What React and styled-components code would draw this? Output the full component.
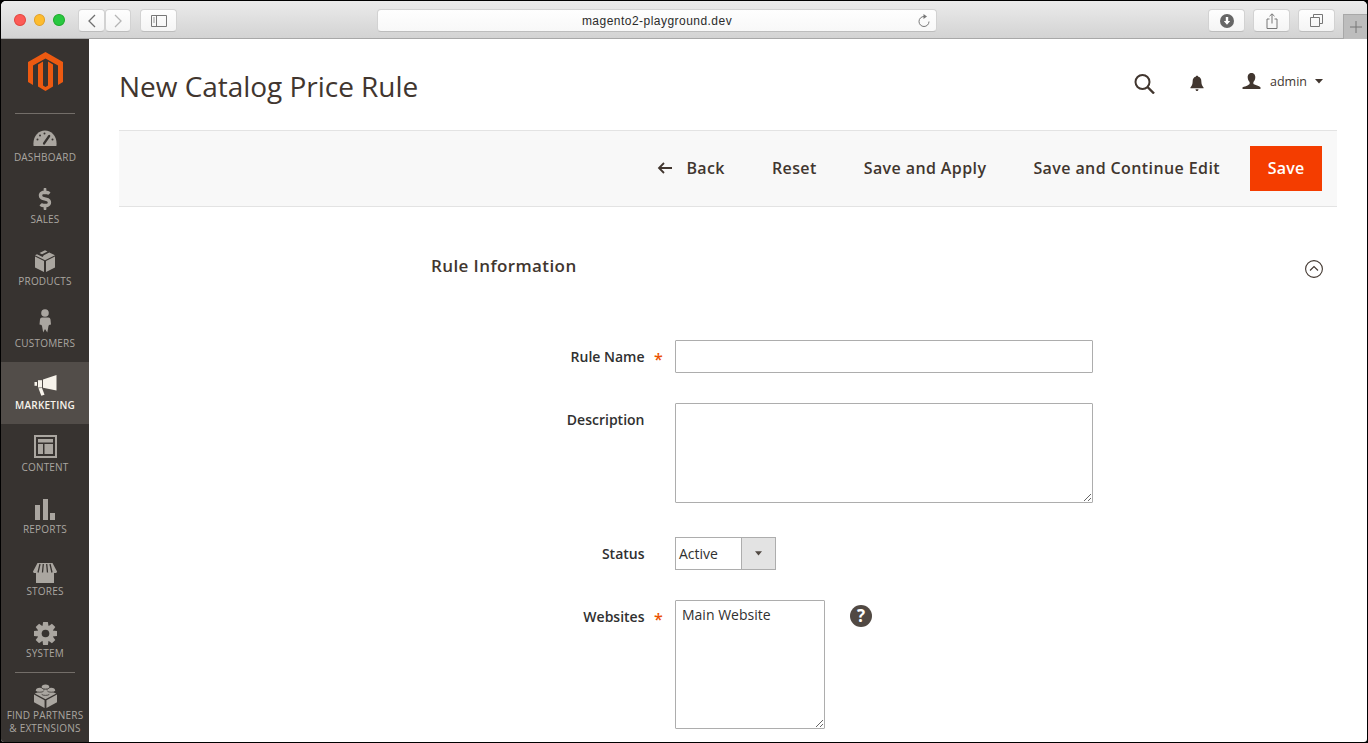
import React from "react";
import styled, { createGlobalStyle } from "styled-components";
import { FaDollarSign } from "react-icons/fa";

const Global = createGlobalStyle`
  html, body { margin: 0; padding: 0; background: #000; overflow: hidden; }
  * { box-sizing: border-box; }
  #root { width: 1368px; height: 743px; }
`;

const Frame = styled.div`
  width: 1368px;
  height: 743px;
  padding: 1px;
  background: #000;
  font-family: "Open Sans", sans-serif;
`;
const Win = styled.div`
  height: 100%;
  border-radius: 5px 5px 3px 3px;
  overflow: hidden;
  display: flex;
  flex-direction: column;
  background: #fff;
`;
const Chrome = styled.div`
  flex: 0 0 38px;
  height: 38px;
  background: linear-gradient(#ebebeb, #d3d3d3);
  border-bottom: 1px solid #a8a8a8;
  display: flex;
  align-items: flex-start;
  padding: 8px 0 0 13px;
`;
const Light = styled.span`
  width: 12px;
  height: 12px;
  border-radius: 50%;
  margin: 5px 8px 0 0;
  background: ${(p) => p.$c};
  border: 1px solid ${(p) => p.$b};
`;
const ChromeBtn = styled.div`
  width: ${(p) => p.$w || 37}px;
  height: 23px;
  margin-left: ${(p) => p.$ml || 0}px;
  background: linear-gradient(#fefefe, #f4f4f4);
  border: 1px solid #d2d2d2;
  border-bottom-color: #bdbdbd;
  border-radius: 4px;
  display: flex;
  align-items: center;
  justify-content: center;
  flex: none;
`;
const Address = styled.div`
  width: 560px;
  height: 23px;
  margin-left: 200px;
  background: linear-gradient(#fefefe, #f8f8f8);
  border: 1px solid #d2d2d2;
  border-bottom-color: #bdbdbd;
  border-radius: 4px;
  display: flex;
  align-items: center;
  justify-content: center;
  position: relative;
  font: 12px "Liberation Sans", sans-serif;
  letter-spacing: 0.47px;
  color: #2a2a2a;
  flex: none;
`;
const Reload = styled.svg`
  position: absolute;
  right: 5px;
  top: 4px;
`;
const NewTab = styled.div`
  width: 24px;
  height: 25px;
  margin: 5px 0 0 8px;
  background: #bdbdbd;
  border: 1px solid #a8a8a8;
  border-right: none;
  border-bottom: none;
  display: flex;
  align-items: center;
  justify-content: center;
  flex: none;
`;

const Body = styled.div`
  flex: 1;
  min-height: 0;
  display: flex;
`;
const Side = styled.nav`
  flex: 0 0 88px;
  background: #373330;
  display: flex;
  flex-direction: column;
  color: #aaa6a0;
`;
const LogoBox = styled.div`
  height: 75px;
  padding: 13px 0 0 1px;
  display: flex;
  justify-content: center;
`;
const Rule = styled.div`
  height: 1px;
  margin: 0 14px;
  background: #736e69;
  flex: none;
`;
const Item = styled.div`
  height: ${(p) => p.$h || 62}px;
  flex: none;
  padding-top: ${(p) => p.$pt ?? 11}px;
  display: flex;
  flex-direction: column;
  align-items: center;
  background: ${(p) => (p.$active ? "#524d49" : "transparent")};
  color: ${(p) => (p.$active ? "#f7f3eb" : "#aaa6a0")};
`;
const IconBox = styled.div`
  height: 25px;
  width: 100%;
  margin-top: ${(p) => p.$dy || 0}px;
  margin-bottom: ${(p) => -(p.$dy || 0)}px;
  display: flex;
  align-items: center;
  justify-content: center;
`;
const ItemLabel = styled.div`
  font-size: 10px;
  line-height: 13px;
  margin-top: ${(p) => p.$mt ?? 1}px;
  font-weight: ${(p) => (p.$active ? 600 : 400)};
  letter-spacing: 0.2px;
  text-align: center;
  white-space: nowrap;
  text-transform: uppercase;
`;

const Main = styled.main`
  flex: 1;
  min-width: 0;
  padding: 0 30px;
  display: flex;
  flex-direction: column;
`;
const TopBar = styled.header`
  height: 91px;
  flex: none;
  display: flex;
  align-items: flex-start;
  justify-content: space-between;
  padding-top: 27px;
`;
const Title = styled.h1`
  margin: 0;
  font-size: 28px;
  line-height: 40px;
  font-weight: 400;
  letter-spacing: -0.03px;
  color: #41362f;
`;
const TopActions = styled.div`
  display: flex;
  align-items: center;
  height: 34px;
  margin-top: -1px;
  padding-right: 14px;
  color: #41362f;
`;
const Glyph = styled.svg`
  flex: none;
  margin-left: ${(p) => p.$ml || 0}px;
  margin-top: ${(p) => p.$mt || 0}px;
`;
const AdminName = styled.span`
  font-size: 12.5px;
  margin: 0 8px 0 9px;
  line-height: 18px;
  position: relative;
  top: 0;
`;
const Toolbar = styled.div`
  height: 77px;
  flex: none;
  background: #f8f8f8;
  border-top: 1px solid #e3e3e3;
  border-bottom: 1px solid #e3e3e3;
  display: flex;
  align-items: center;
  justify-content: flex-end;
  padding-right: 15px;
`;
const Action = styled.button`
  border: 0;
  background: none;
  padding: 0 0 2px;
  margin-right: ${(p) => p.$mr ?? 47}px;
  font: 600 16px/22px "Open Sans", sans-serif;
  letter-spacing: 0.4px;
  color: #41362f;
  display: flex;
  align-items: center;
  gap: 14px;
`;
const SaveBtn = styled.button`
  width: 72px;
  height: 45px;
  border: 0;
  padding: 0 0 2px;
  background: #f43d00;
  color: #fff;
  font: 600 16px/22px "Open Sans", sans-serif;
  letter-spacing: 0.2px;
`;
const SectionHead = styled.div`
  flex: none;
  height: 133px;
  padding: 47px 14px 0 312px;
  display: flex;
  justify-content: space-between;
  align-items: flex-start;
`;
const SectionTitle = styled.h2`
  margin: 0;
  font-size: 17px;
  line-height: 24px;
  font-weight: 600;
  letter-spacing: 0.4px;
  color: #41362f;
`;
const Row = styled.div`
  display: grid;
  grid-template-columns: 213.500px 30.500px auto 1fr;
  padding-left: 312px;
  margin-bottom: ${(p) => p.$mb}px;
  flex: none;
`;
const Label = styled.label`
  text-align: right;
  font-size: 14px;
  font-weight: 600;
  line-height: 20px;
  padding-top: 7px;
  color: #303030;
`;
const Star = styled.span`
  font-size: 16px;
  font-weight: 600;
  line-height: 20px;
  padding: 9px 0 0 9.500px;
  color: #eb5202;
`;
const TextInput = styled.input`
  display: block;
  width: 418px;
  height: 33px;
  border: 1px solid #adadad;
  background: #fff;
  border-radius: 1px;
  outline: none;
`;
const Area = styled.textarea`
  display: block;
  width: ${(p) => p.$w}px;
  height: ${(p) => p.$h}px;
  border: 1px solid #adadad;
  background: #fff;
  border-radius: 1px;
  padding: 4px 6px;
  margin: 0;
  font: 14px/20px "Open Sans", sans-serif;
  color: #303030;
  outline: none;
`;
const Select = styled.div`
  width: 101px;
  height: 33px;
  border: 1px solid #adadad;
  display: flex;
  background: #fff;
  font-size: 14px;
  line-height: 31px;
  color: #303030;
`;
const SelectValue = styled.span`
  flex: 1;
  padding-left: 3px;
`;
const SelectArrow = styled.span`
  width: 34px;
  background: #e3e3e3;
  border-left: 1px solid #adadad;
  display: flex;
  align-items: center;
  justify-content: center;
`;
const Help = styled.span`
  width: 22px;
  height: 22px;
  margin: 5px 0 0 25px;
  border-radius: 50%;
  background: #514943;
  color: #fff;
  font: 700 17px/22px "Open Sans", sans-serif;
  text-align: center;
`;

const DashIcon = () => (
  <svg width="24" height="16" viewBox="0 0 24 16">
    <path fill="#aaa6a0" d="M.6 16C-.6 7 5 .5 12 .5S24.600 7 23.400 16z" />
    <path stroke="#373330" strokeWidth="2.200" strokeLinecap="round" d="M11 13.500 16.200 6" />
    <g fill="#373330">
      <circle cx="4.500" cy="9.500" r="1" /><circle cx="7" cy="5.500" r="1" /><circle cx="11.500" cy="3.500" r="1" /><circle cx="19.500" cy="9.500" r="1" />
    </g>
  </svg>
);
const BoxIcon = () => (
  <svg width="22" height="22" viewBox="0 0 22 22">
    <g fill="#aaa6a0">
      <path d="M1 6.500 10 11v11L1 17.500z" />
      <path d="M21 6.500 12 11v11l9-4.500z" />
      <path d="M5.500 3 11 .3l2.500 1.200L8 4.300z" />
      <path d="m9.800 5.300 5.500-2.800L21 5.300 11 10.200 1 5.300l2-1 5.600 2.700z" />
    </g>
  </svg>
);
const PersonIcon = () => (
  <svg width="12" height="24" viewBox="0 0 12 24">
    <g fill="#aaa6a0">
      <circle cx="6" cy="4" r="3.800" />
      <path d="M2.500 8.500h7c1 0 1.800.8 2 2l.5 5-2 .5-.5 1-1.200 6.500L6 20l-1.800 3.500L3 17l-.5-1-2-.500.5-5c.2-1.200 1-2 2-2z" />
    </g>
  </svg>
);
const MegaIcon = () => (
  <svg width="23" height="21" viewBox="0 0 23 21">
    <g fill="#f7f3eb">
      <path d="M22.500 0v15.500L9 12.800V4.500z" />
      <path d="M4 5.200h4v7.300H4z" />
      <path d="M.5 7h2.500v3.800H.5z" />
      <path d="M4.500 13.200 8 13l2.500 6.800-3.200 1z" />
    </g>
  </svg>
);
const ContentIcon = () => (
  <svg width="23" height="23" viewBox="0 0 23 23">
    <rect x="1" y="1" width="21" height="21" fill="none" stroke="#aaa6a0" strokeWidth="2" />
    <g fill="#aaa6a0">
      <rect x="4" y="4" width="15" height="3.500" />
      <rect x="4" y="9" width="5" height="10" />
      <rect x="10.500" y="9" width="8.500" height="10" />
    </g>
  </svg>
);
const BarsIcon = () => (
  <svg width="20" height="21" viewBox="0 0 20 21">
    <g fill="#aaa6a0">
      <rect x="0" y="6" width="5" height="15" />
      <rect x="8" y="0" width="5" height="21" />
      <rect x="15" y="14" width="5" height="7" />
    </g>
  </svg>
);
const StoreIcon = () => (
  <svg width="24" height="20" viewBox="0 0 24 20">
    <g fill="#aaa6a0">
      <path d="M3 9.500h18V20H3z" />
      <path d="M4.500 0h15L24 8.500c0 1-1 1.500-2 1.500H2c-1 0-2-.5-2-1.500z" />
    </g>
    <path stroke="#373330" strokeWidth="1.300" d="M7 1 5 9.500M10.300 1 9.500 9.500M13.700 1l.8 8.500M17 1l2 8.500" />
  </svg>
);
const GearIcon = () => (
  <svg width="23" height="23" viewBox="0 0 24 24">
    <g fill="#aaa6a0">
      <circle cx="12" cy="12" r="8.500" />
      {[0, 45, 90, 135, 180, 225, 270, 315].map((a) => (
        <path key={a} d="M9.500 0h5l.7 5H8.800z" transform={`rotate(${a} 12 12)`} />
      ))}
    </g>
    <circle cx="12" cy="12" r="4" fill="#373330" />
  </svg>
);
const BrickIcon = () => (
  <svg width="23" height="24" viewBox="0 0 24 25">
    <g fill="#aaa6a0">
      <path d="M0 11v8l11 6v-8z" />
      <path d="M24 11v8l-11 6v-8z" />
      <path d="M12 6 .8 10 12 16l11.200-6z" />
      <ellipse cx="12" cy="3.200" rx="4" ry="2.700" />
      <ellipse cx="6" cy="6.500" rx="4" ry="2.700" />
      <ellipse cx="18" cy="6.500" rx="4" ry="2.700" />
      <ellipse cx="12" cy="9.800" rx="4" ry="2.700" />
    </g>
    <g fill="none" stroke="#373330" strokeWidth=".8">
      <path d="M8 4.200c1 1.400 7 1.400 8 0M2 7.500c1 1.400 7 1.400 8 0M14 7.500c1 1.400 7 1.400 8 0M8 10.800c1 1.400 7 1.400 8 0" />
    </g>
  </svg>
);
const Logo = () => (
  <svg width="35" height="39" viewBox="0 0 35 39">
    <g fill="#ec5a11">
      <path d="M17.500 0 35 10v20l-5 3V13.500L17.500 6.500 5 13.500V33l-5-3V10z" />
      <path d="M10 12.500 15 9.500v24l2.500 1.500 2.500-1.500v-24l5 3v22L17.500 39 10 34.500z" />
    </g>
  </svg>
);

const items = [
  ["Dashboard", <DashIcon key="d" />, 0],
  ["Sales", <FaDollarSign key="s" size={22} color="#aaa6a0" />, -1],
  ["Products", <BoxIcon key="p" />, -1],
  ["Customers", <PersonIcon key="c" />, -3],
  ["Marketing", <MegaIcon key="m" />, 0, true],
  ["Content", <ContentIcon key="n" />, -1],
  ["Reports", <BarsIcon key="r" />, 0],
  ["Stores", <StoreIcon key="o" />, 1],
  ["System", <GearIcon key="y" />, 0],
];

export default function App() {
  return (
    <Frame>
      <Global />
      <Win>
        <Chrome>
          <Light $c="#fc5b57" $b="#e2463f" />
          <Light $c="#fdbc2e" $b="#e0a028" />
          <Light $c="#28c83f" $b="#1faa2d" />
          <ChromeBtn $w={27} $ml={5}>
            <svg width="10" height="14" viewBox="0 0 10 14"><path d="M8 1 2 7l6 6" fill="none" stroke="#6f6f6f" strokeWidth="1.300" /></svg>
          </ChromeBtn>
          <ChromeBtn $w={26}>
            <svg width="10" height="14" viewBox="0 0 10 14"><path d="m2 1 6 6-6 6" fill="none" stroke="#b5b5b5" strokeWidth="1.300" /></svg>
          </ChromeBtn>
          <ChromeBtn $w={37} $ml={9}>
            <svg width="16" height="12" viewBox="0 0 16 12"><path d="M.5.500h15v11H.5zM5.500.500v11" fill="none" stroke="#777" /><path d="M2 3h2M2 5h2M2 7h2" stroke="#999" /></svg>
          </ChromeBtn>
          <Address>
            magento2-playground.dev
            <Reload width="14" height="14" viewBox="0 0 14 14">
              <path d="M7 2.500A5 5 0 1 0 12 7.500" fill="none" stroke="#777" />
              <path d="M6.500 0v5L10 2.500z" fill="#777" />
            </Reload>
          </Address>
          <ChromeBtn $ml={271}>
            <svg width="14" height="14" viewBox="0 0 14 14"><circle cx="7" cy="7" r="7" fill="#666" /><path d="M5.800 3h2.400v4h2L7 10.800 3.800 7h2z" fill="#fff" /></svg>
          </ChromeBtn>
          <ChromeBtn $ml={8}>
            <svg width="12" height="16" viewBox="0 0 12 16"><path d="M3.500 6H1v9.500h10V6H8.500M6 10.500V1M3.500 3.200 6 .8l2.500 2.400" fill="none" stroke="#777" /></svg>
          </ChromeBtn>
          <ChromeBtn $ml={8}>
            <svg width="13" height="13" viewBox="0 0 13 13"><path d="M3.500 3V.5h9v9H10M.5 3.500h9v9h-9z" fill="none" stroke="#777" /></svg>
          </ChromeBtn>
          <NewTab>
            <svg width="12" height="12" viewBox="0 0 12 12"><path d="M6 0v12M0 6h12" stroke="#777" /></svg>
          </NewTab>
        </Chrome>
        <Body>
          <Side>
            <LogoBox><Logo /></LogoBox>
            <Rule />
            {items.map(([name, icon, dy, active]) => (
              <Item key={name} $active={active}>
                <IconBox $dy={dy}>{icon}</IconBox>
                <ItemLabel $active={active}>{name}</ItemLabel>
              </Item>
            ))}
            <Rule />
            <Item $h={69} $pt={10}>
              <IconBox><BrickIcon /></IconBox>
              <ItemLabel $mt={1}>Find Partners<br />&amp; Extensions</ItemLabel>
            </Item>
          </Side>
          <Main>
            <TopBar>
              <Title>New Catalog Price Rule</Title>
              <TopActions>
                <Glyph $mt={3} width="21" height="20" viewBox="0 0 21 20"><circle cx="8.500" cy="8" r="7" fill="none" stroke="#41362f" strokeWidth="2" /><path d="m13.500 13 6.500 6.500" stroke="#41362f" strokeWidth="2.400" /></Glyph>
                <Glyph $ml={35} $mt={3} width="14" height="17" viewBox="0 0 16 18"><path d="M8 0c1 0 1.500.6 1.500 1.400C12 2 13 4 13 7c0 3 1 5 2.500 6.500v1H.5v-1C2 12 3 10 3 7c0-3 1-5 3.500-5.600C6.500.6 7 0 8 0zM6.300 15.500h3.400C9.600 16.800 9 17.500 8 17.500s-1.600-.7-1.700-2z" fill="#41362f" /></Glyph>
                <Glyph $ml={38} $mt={-1} width="19" height="17" viewBox="0 0 20 18"><path d="M10 0c3 0 4.200 2.400 4 5-.2 2.200-1 3.600-2 4.600v2c2 1.200 6 1.800 7.500 3.400v2H.5v-2C2 14.400 6 13.800 8 11.600v-2C7 8.600 6.200 7.200 6 5 5.800 2.400 7 0 10 0z" fill="#41362f" /></Glyph>
                <AdminName>admin</AdminName>
                <Glyph $mt={-1} width="8" height="5" viewBox="0 0 10 6"><path d="M0 0h10L5 5.500z" fill="#41362f" /></Glyph>
              </TopActions>
            </TopBar>
            <Toolbar>
              <Action>
                <svg width="15" height="12" viewBox="0 0 15 12"><path d="M15 6H2M7 1 2 6l5 5" fill="none" stroke="#41362f" strokeWidth="1.800" /></svg>
                Back
              </Action>
              <Action>Reset</Action>
              <Action>Save and Apply</Action>
              <Action $mr={30}>Save and Continue Edit</Action>
              <SaveBtn>Save</SaveBtn>
            </Toolbar>
            <SectionHead>
              <SectionTitle>Rule Information</SectionTitle>
              <Glyph $mt={6} width="18" height="18" viewBox="0 0 18 18"><circle cx="9" cy="9" r="8.400" fill="none" stroke="#41362f" strokeWidth="1.100" /><path d="m5 10.500 4-4 4 4" fill="none" stroke="#41362f" strokeWidth="1.100" /></Glyph>
            </SectionHead>
            <Row $mb={30}>
              <Label>Rule Name</Label>
              <Star>*</Star>
              <TextInput />
            </Row>
            <Row $mb={34}>
              <Label>Description</Label>
              <span />
              <Area $w={418} $h={100} />
            </Row>
            <Row $mb={30}>
              <Label>Status</Label>
              <span />
              <Select>
                <SelectValue>Active</SelectValue>
                <SelectArrow>
                  <svg width="7" height="5" viewBox="0 0 9 6"><path d="M0 0h9L4.500 5.500z" fill="#514943" /></svg>
                </SelectArrow>
              </Select>
            </Row>
            <Row $mb={0}>
              <Label>Websites</Label>
              <Star>*</Star>
              <Area $w={150} $h={129} defaultValue="Main Website" />
              <Help>?</Help>
            </Row>
          </Main>
        </Body>
      </Win>
    </Frame>
  );
}
